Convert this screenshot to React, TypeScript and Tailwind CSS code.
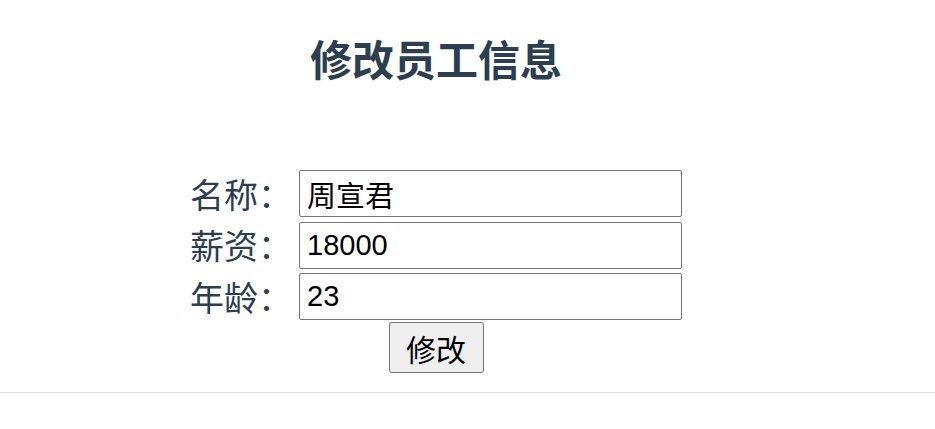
import React from "react";

const rows: [string, string][] = [
  ["名称：", "周宣君"],
  ["薪资：", "18000"],
  ["年龄：", "23"],
];

export default function App() {
  return (
    <div className="w-[935px] h-[429px] bg-white overflow-hidden font-['Liberation_Sans','Noto_Sans_CJK_SC',sans-serif]">
      <div className="w-[872px] flex flex-col items-center">
        <h1 className="mt-[36px] h-[44px] leading-[44px] text-[42px] font-bold text-[#2c3e50] font-['Noto_Sans_CJK_SC','Noto_Sans',sans-serif]">
          修改员工信息
        </h1>
        <div className="mt-[90px] flex flex-col gap-[4.5px]">
          {rows.map(([label, value]) => (
            <div key={label} className="flex items-center">
              <span className="w-[109px] text-[34px] leading-[40px] text-[#2c3e50] whitespace-nowrap font-['Noto_Sans_CJK_SC','Noto_Sans',sans-serif]">
                {label}
              </span>
              <input
                readOnly
                value={value}
                className="w-[383px] h-[47px] border border-[#767676] rounded-[2px] px-[7px] text-[29px] text-black bg-white outline-none font-['Liberation_Sans','Noto_Sans_CJK_SC',sans-serif]"
              />
            </div>
          ))}
        </div>
        <button className="mt-[2px] w-[95px] h-[51px] bg-[#efefef] border border-[#767676] rounded-[3px] text-[30px] text-black leading-none font-['Noto_Sans_CJK_SC',sans-serif]">
          修改
        </button>
      </div>
      <div className="mt-[19px] h-px w-full bg-[#dcdcdc]" />
    </div>
  );
}
